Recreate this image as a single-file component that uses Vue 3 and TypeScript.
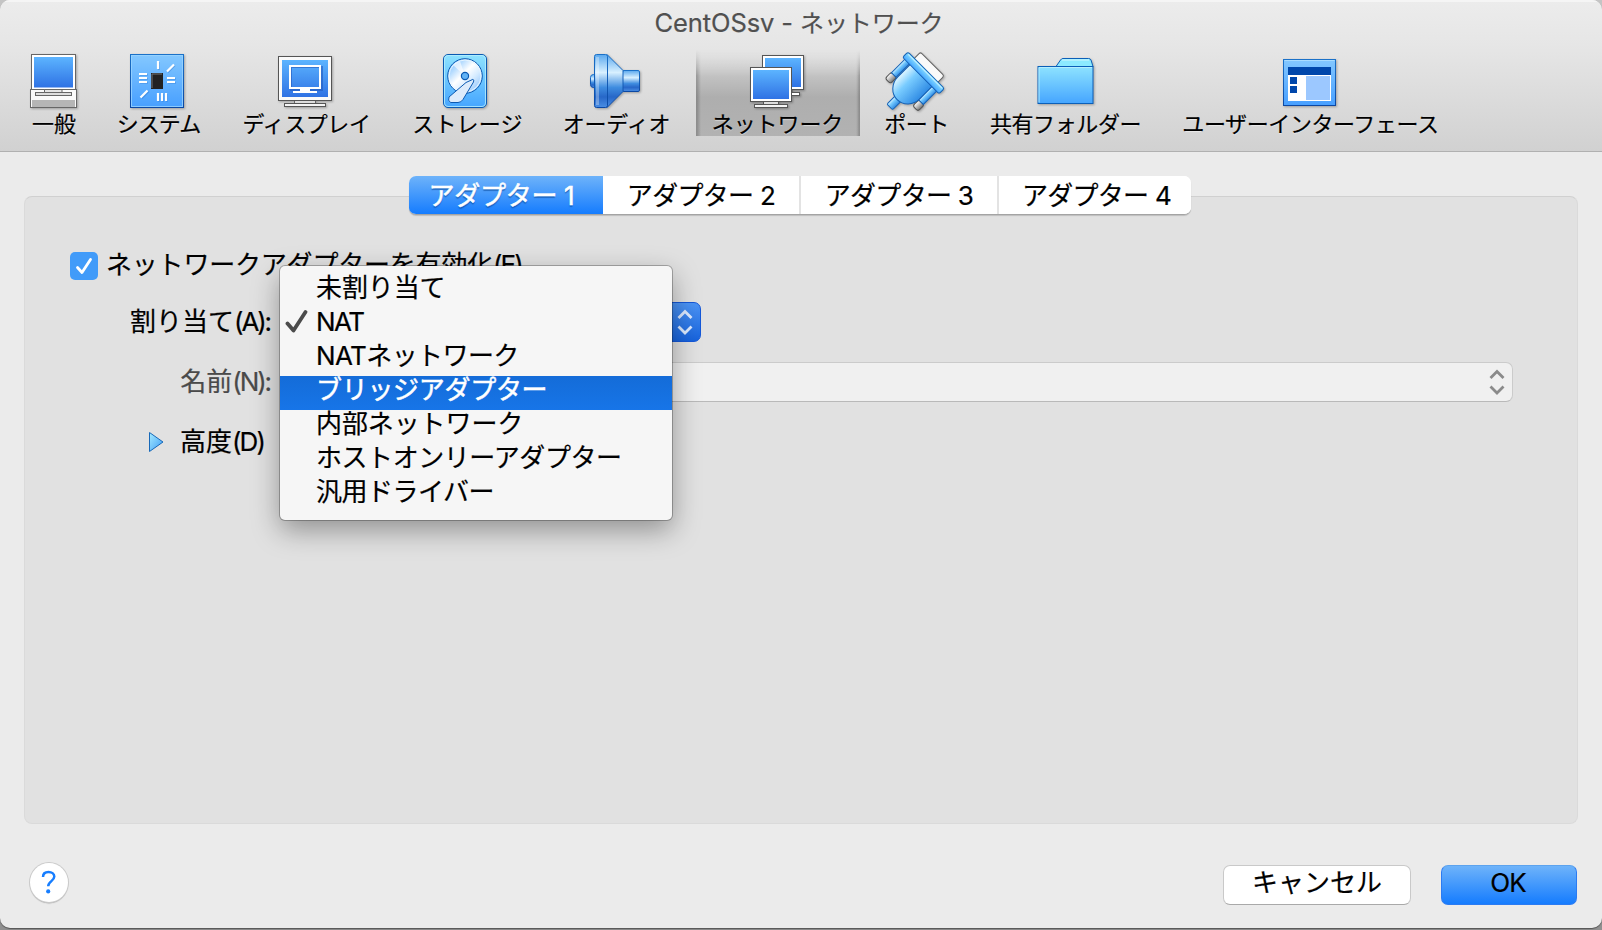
<script setup lang="ts">
interface Tool { id: string; label: string; width: number; view: string; gap?: number; spacing: number; shift?: number; selected?: boolean }
interface MenuItem { label: string; spacing: number; state?: 'checked' | 'active' }

const tools: Tool[] = [
  { id: 'general', label: '一般', width: 80, view: '22 50 64 62', spacing: 0 },
  { id: 'system', label: 'システム', width: 130, view: '127 50 64 62', spacing: -0.9, shift: -1 },
  { id: 'display', label: 'ディスプレイ', width: 162, view: '273 50 64 62', spacing: -0.4, shift: 3 },
  { id: 'storage', label: 'ストレージ', width: 164, view: '436 50 64 62', spacing: 0.2, shift: -1 },
  { id: 'audio', label: 'オーディオ', width: 132, view: '584 50 64 62', spacing: -0.2, shift: 1 },
  { id: 'network', label: 'ネットワーク', width: 164, view: '746 50 64 62', gap: 14, spacing: -0.1, shift: -1, selected: true },
  { id: 'port', label: 'ポート', width: 111, view: '883.5 50 64 62', spacing: -0.5, shift: 2 },
  { id: 'folder', label: '共有フォルダー', width: 189, view: '1033.5 50 64 62', spacing: -0.4 },
  { id: 'ui', label: 'ユーザーインターフェース', width: 300, view: '1278 50 64 62', spacing: -0.4, shift: 1 },
]
const tabs: number[] = [1, 2, 3, 4]
const menu: MenuItem[] = [
  { label: '未割り当て', spacing: -0.1 },
  { label: 'NAT', spacing: -1.5, state: 'checked' },
  { label: 'NATネットワーク', spacing: -0.6 },
  { label: 'ブリッジアダプター', spacing: -0.3, state: 'active' },
  { label: '内部ネットワーク', spacing: -0.1 },
  { label: 'ホストオンリーアダプター', spacing: -0.45 },
  { label: '汎用ドライバー', spacing: -0.5 },
]
</script>

<template>
  <div class="desktop">
    <div class="window">
      <header class="toolbar">
        <h1 class="title"><span class="latin">CentOSsv - </span><span>ネットワーク</span></h1>
        <nav class="tools">
          <div
            v-for="t in tools" :key="t.id" class="tool" :class="{ selected: t.selected }"
            :style="{ width: t.width + 'px', marginLeft: (t.gap || 0) + 'px' }"
          >
            <svg class="tool-icon" :viewBox="t.view" width="64" height="62">
              <defs>
                <linearGradient :id="t.id + '-scr'" x1="0" y1="0" x2="0" y2="1"><stop offset="0" stop-color="#5cb4ff" /><stop offset="1" stop-color="#2f72e4" /></linearGradient>
                <linearGradient :id="t.id + '-sky'" x1="0" y1="0" x2="0" y2="1"><stop offset="0" stop-color="#84c8ff" /><stop offset="1" stop-color="#479fff" /></linearGradient>
                <linearGradient :id="t.id + '-cyan'" x1="0" y1="0" x2="0" y2="1"><stop offset="0" stop-color="#8ee3ff" /><stop offset="1" stop-color="#45a5ff" /></linearGradient>
                <linearGradient :id="t.id + '-tube'" x1="0" y1="0" x2="0" y2="1"><stop offset="0" stop-color="#5aa8ee" /><stop offset=".34" stop-color="#d8f0ff" /><stop offset=".62" stop-color="#3f8de0" /><stop offset=".8" stop-color="#2767c8" /><stop offset="1" stop-color="#4a8ee4" /></linearGradient>
                <linearGradient :id="t.id + '-edge'" x1="0" y1="0" x2="0" y2="1"><stop offset="0" stop-color="#1b71c8" /><stop offset="1" stop-color="#0b48a4" /></linearGradient>
                <linearGradient :id="t.id + '-disc'" x1="0" y1="0" x2="1" y2="1"><stop offset="0" stop-color="#74b9ff" /><stop offset=".25" stop-color="#b4dbff" /><stop offset=".45" stop-color="#fff" /><stop offset=".65" stop-color="#d5ebff" /><stop offset="1" stop-color="#74b4fa" /></linearGradient>
                <linearGradient :id="t.id + '-body'" x1="0" y1="0" x2="1" y2="0"><stop offset="0" stop-color="#e2f7ff" /><stop offset=".35" stop-color="#79ccff" /><stop offset="1" stop-color="#2f8be4" /></linearGradient>
                <linearGradient :id="t.id + '-metal'" x1="0" y1="0" x2="1" y2="0"><stop offset="0" stop-color="#fff" /><stop offset="1" stop-color="#777" /></linearGradient>
              </defs>

              <g v-if="t.id === 'general'" stroke="#666">
                <rect x="31.5" y="54.5" width="44" height="35" fill="#fff" />
                <rect x="34" y="57" width="39" height="30.5" stroke="none" :fill="`url(#${t.id}-scr)`" />
                <rect x="30.5" y="89.5" width="46" height="18" fill="#fafafa" />
                <rect x="32" y="100" width="43" height="7" fill="#b5b5b5" stroke="none" />
                <rect x="35.5" y="92.5" width="36" height="3" fill="#ddd" />
                <path d="M44.5 89.5v3h17.500v-3z" fill="#e4e4e4" />
              </g>

              <g v-else-if="t.id === 'system'">
                <rect x="130.500" y="54.500" width="53" height="53" :fill="`url(#${t.id}-sky)`" :stroke="`url(#${t.id}-edge)`" />
                <rect x="131.500" y="55.500" width="51" height="51" fill="none" stroke="#9ad5ff" stroke-opacity=".8" />
                <g stroke="#2a74ca" stroke-opacity=".4" stroke-width="1.500" transform="translate(1 1)">
                  <path d="M158 61v8M167 71.500l7-7M167 78h8M167 82h8M158 93v8M162 93v8M166 93v8M141 97.500l7-7M139 74h8M139 78h8M139 82h8" fill="none" />
                </g>
                <path d="M158 61v8M167 71.500l7-7M167 78h8M167 82h8M158 93v8M162 93v8M166 93v8M140.500 97.500l7-7M139 74h8M139 78h8M139 82h8" fill="none" stroke="#fff" stroke-width="2.200" />
                <rect x="151" y="73" width="12" height="16" fill="#222" />
                <path d="M152 88V74h10" fill="none" stroke="#777" />
              </g>

              <g v-else-if="t.id === 'display'">
                <rect x="278.500" y="56.500" width="53" height="44" fill="#fafafa" stroke="#555" />
                <rect x="282" y="60" width="46" height="37" :fill="`url(#${t.id}-scr)`" />
                <rect x="291" y="67" width="31" height="23" fill="none" stroke="#2259bd" stroke-width="2" opacity=".6" />
                <rect x="290" y="66" width="30" height="22" fill="none" stroke="#fff" stroke-width="2" />
                <path d="M300 89h10v2h7v2h-24v-2h7z" fill="#fff" />
                <path d="M294.500 101v3h21v-3" fill="#ddd" stroke="#666" />
                <rect x="284.500" y="103.500" width="41" height="3" fill="#f4f4f4" stroke="#555" />
              </g>

              <g v-else-if="t.id === 'storage'" stroke="#0b5ab2">
                <rect x="443.500" y="54.500" width="43" height="53" rx="4.500" :fill="`url(#${t.id}-cyan)`" />
                <rect x="444.500" y="55.500" width="41" height="51" rx="3.500" fill="none" stroke="#b6efff" opacity=".8" />
                <circle cx="465" cy="76" r="17.300" :fill="`url(#${t.id}-disc)`" />
                <circle cx="465" cy="76" r="16" fill="none" stroke="#e6f5ff" />
                <path d="M465 76L453 65a16 16 0 0 1 7-4z" fill="#fff" stroke="none" opacity=".6" />
                <circle cx="465" cy="76" r="3.600" fill="#62b3f6" stroke-width="1.200" />
                <path d="M472.800 79.400Q474.500 79.500 473.500 82L463 99.500Q461 102.500 458 102.500H450.500Q447.500 100.500 449 97L466 82.500Z" fill="#dcebfb" />
              </g>

              <g v-else-if="t.id === 'audio'" :stroke="`url(#${t.id}-edge)`">
                <rect x="590.500" y="74.500" width="8" height="13" rx="3" :fill="`url(#${t.id}-tube)`" />
                <rect x="622.500" y="70.500" width="17" height="21" rx="1.500" :fill="`url(#${t.id}-tube)`" />
                <path d="M607 54.500L623 70.500V91.500L607 107.500Z" :fill="`url(#${t.id}-tube)`" />
                <rect x="594.500" y="54.500" width="13" height="53" rx="2" :fill="`url(#${t.id}-tube)`" />
                <path d="M597.500 57v48" stroke="#fff" stroke-opacity=".3" stroke-width="3" />
              </g>

              <g v-else-if="t.id === 'network'" stroke="#555">
                <path d="M784 90v3h8v-3" fill="#ddd" />
                <rect x="770.500" y="92.500" width="29" height="3" fill="#fff" />
                <rect x="762.500" y="55.500" width="41" height="34" fill="#fff" />
                <rect x="765" y="58" width="36" height="29" stroke="none" :fill="`url(#${t.id}-scr)`" />
                <path d="M763.500 102v3h15v-3" fill="#ddd" />
                <rect x="750.500" y="67.500" width="41" height="34" fill="#fff" />
                <rect x="753" y="70" width="36" height="29" stroke="none" :fill="`url(#${t.id}-scr)`" />
                <rect x="754.500" y="104.500" width="33" height="3" fill="#f4f4f4" />
              </g>

              <g v-else-if="t.id === 'port'" transform="translate(922.8 72.7) rotate(45)" stroke="#1361b6">
                <rect x="-16.500" y="-12.500" width="33.500" height="10" rx="2" fill="#fafafa" stroke="#666" />
                <rect x="-23" y="22" width="7.500" height="9" rx="2.500" :fill="`url(#${t.id}-metal)`" stroke="#555" />
                <rect x="16" y="22" width="7.500" height="9" rx="2.500" :fill="`url(#${t.id}-metal)`" stroke="#555" />
                <rect x="-3.500" y="33" width="8" height="15" rx="1.500" :fill="`url(#${t.id}-body)`" />
                <path d="M-15 3H16V21A15.500 16.500 0 0 1 -15 21Z" :fill="`url(#${t.id}-body)`" />
                <rect x="-22.500" y="3" width="6.500" height="19.500" :fill="`url(#${t.id}-body)`" />
                <rect x="16" y="3" width="6.500" height="19.500" :fill="`url(#${t.id}-body)`" />
                <rect x="-25.500" y="-3.800" width="51.500" height="7.600" rx="2" :fill="`url(#${t.id}-cyan)`" />
                <path d="M-23.500 -2.300H24" stroke="#c7f1ff" />
              </g>

              <g v-else-if="t.id === 'folder'" stroke="#0b5fb8">
                <path d="M1055.500 66.500L1060 60Q1061 58.500 1062.500 58.500H1088Q1090 58.500 1090.500 60L1092.500 66.500Z" fill="#8ceaff" />
                <path d="M1061.500 60h27" stroke="#d4f8ff" />
                <rect x="1037.500" y="66.500" width="55" height="37" :fill="`url(#${t.id}-cyan)`" />
                <path d="M1038.500 102.500v-35h53" fill="none" stroke="#b4eeff" />
              </g>

              <g v-else>
                <rect x="1283.500" y="59.500" width="52" height="46" :fill="`url(#${t.id}-sky)`" :stroke="`url(#${t.id}-edge)`" />
                <path d="M1284.500 60.500h50" stroke="#a9dcff" />
                <rect x="1288" y="67" width="43" height="8" fill="#0047ab" />
                <rect x="1288" y="75" width="43" height="26" fill="#fff" />
                <rect x="1306" y="76" width="24" height="24" fill="#9cc8ff" />
                <path d="M1290 77h7v7h-7zM1290 86h7v7h-7z" fill="#0047ab" />
              </g>
            </svg>
            <span class="tool-label" :style="{ letterSpacing: t.spacing + 'px', paddingLeft: Math.max(t.shift || 0, 0) + 'px', paddingRight: Math.max(-(t.shift || 0), 0) + 'px' }">{{ t.label }}</span>
          </div>
        </nav>
      </header>

      <main class="content">
        <div class="tabs">
          <button v-for="n in tabs" :key="n" class="tab" :class="{ current: n === 1 }">アダプター {{ n }}</button>
        </div>
        <section class="panel">
          <div class="enable">
            <span class="checkbox">
              <svg width="28" height="28" viewBox="0 0 28 28"><path d="M7.500 15.500L12 20.500L20.500 7.500" fill="none" stroke="#fff" stroke-width="2.800" stroke-linecap="round" stroke-linejoin="round" /></svg>
            </span>
            <span class="enable-text">ネットワークアダプターを有効化<span class="tight">(E)</span></span>
          </div>
          <div class="row attach">
            <label>割り当て<span class="tight">(A):</span></label>
            <div class="select popup">
              <svg width="16" height="26" viewBox="0 0 16 26"><path d="M1.500 9L8 2.500L14.500 9M1.500 17.500L8 24L14.500 17.500" /></svg>
            </div>
            <div class="menu">
              <div v-for="m in menu" :key="m.label" class="menu-item" :class="m.state" :style="{ letterSpacing: m.spacing + 'px' }">
                <svg v-if="m.state === 'checked'" class="tick" width="24" height="26" viewBox="0 0 24 26"><path d="M2.500 14.500L8.500 21.500L20.500 3" fill="none" stroke="#4b4b4b" stroke-width="3.800" stroke-linecap="round" stroke-linejoin="round" /></svg>
                <span>{{ m.label }}</span>
              </div>
            </div>
          </div>
          <div class="row name">
            <label>名前<span class="tight">(N):</span></label>
            <div class="select disabled">
              <svg width="16" height="26" viewBox="0 0 16 26"><path d="M1.500 9L8 2.500L14.500 9M1.500 17.500L8 24L14.500 17.500" /></svg>
            </div>
          </div>
          <div class="advanced">
            <svg width="17" height="22" viewBox="0 0 17 22">
              <defs><linearGradient id="adv" x1="0" y1="0" x2="1" y2="1"><stop offset="0" stop-color="#a6ebff" /><stop offset="1" stop-color="#3d9cf5" /></linearGradient></defs>
              <path d="M1.500 1.500V20.500L15 11Z" fill="url(#adv)" stroke="#1768b8" stroke-linejoin="round" />
            </svg>
            <span>高度<span class="tight">(D)</span></span>
          </div>
        </section>
        <footer class="footer">
          <button class="help">
            <svg width="16" height="26" viewBox="0 0 16 26"><path d="M2 7C2 3.500 4.300 1.900 7.500 1.900S13.300 3.700 13.300 6.600C13.300 11 7.200 11.300 7.200 16.300" fill="none" stroke="#177eff" stroke-width="2.500" /><circle cx="7.200" cy="21.400" r="2.100" fill="#177eff" /></svg>
          </button>
          <button class="button cancel">キャンセル</button>
          <button class="button ok">OK</button>
        </footer>
      </main>
    </div>
  </div>
</template>

<style>
html, body { margin: 0; background: #999; overflow: hidden; }
</style>

<style scoped>
* { box-sizing: border-box; }
.desktop {
  width: 1602px; height: 930px; overflow: hidden;
  font: 26px/34px "Inter", "Noto Sans CJK JP", sans-serif; color: #000;
  -webkit-text-stroke: .2px currentColor;
  background: linear-gradient(to bottom, #c4c4c4 0 500px, #909090 500px);
}
button { font: inherit; color: inherit; padding: 0; border: 0; }
.window { width: 1602px; height: 928px; background: #ebebeb; border-radius: 10px; overflow: hidden; box-shadow: 0 1px 1px #555; }
.toolbar { height: 152px; border-bottom: 1px solid #b0b0b0; background: linear-gradient(#ececec, #e6e6e6 30%, #d1d1d1); box-shadow: inset 0 2px 0 #f5f5f5; }
.title { margin: 0; height: 50px; padding-top: 6px; font-size: 24px; font-weight: 400; color: #505050; text-align: center; letter-spacing: -.1px; padding-right: 4px; }
.latin { white-space: pre; font-size: 25.5px; }
.tools { display: flex; padding-left: 14px; }
.tool { position: relative; height: 86px; display: flex; flex-direction: column; align-items: center; flex: none; }
.tool.selected::before {
  content: ""; position: absolute; inset: 0;
  background: linear-gradient(to right, rgba(0,0,0,.2) 0 1px, rgba(0,0,0,.1) 3px, transparent 5px, transparent 160px, rgba(0,0,0,.1) 162px, rgba(0,0,0,.2) 163px), linear-gradient(#d8d8d8, #c6c6c6 25%, #aeaeae 55%, #b2b2b2);
  mask-image: linear-gradient(transparent, #000 30%);
}
.tool-icon { position: relative; flex: none; overflow: visible; filter: drop-shadow(1px 1px 1px rgba(0,0,0,.28)); }
.tool-label { position: relative; font-size: 22px; line-height: 24px; white-space: nowrap; text-shadow: 0 1px 1px rgba(255,255,255,.5); }
.content { padding: 24px 24px 0; }
.tabs { position: relative; z-index: 1; display: flex; width: 782px; height: 39px; margin: 0 auto -19px 385px; border-radius: 7px; overflow: hidden; background: #fff; border-bottom: 1px solid #a4a4a4; box-shadow: 0 1px 1px rgba(0,0,0,.16); }
.tab { width: 198px; height: 38px; line-height: 37px; background: #fff; border-right: 2px solid #e3e3e3; letter-spacing: -.7px; white-space: nowrap; }
.tab:last-child { width: 192px; border: 0; padding-left: 3px; }
.tab.current { width: 194px; height: 39px; border: 0; padding-right: 9px; letter-spacing: -.3px; color: #fff; background: linear-gradient(#6eb3fa, #157cfe); border-bottom: 1px solid #0b64f2; text-shadow: 0 2px 1px rgba(0,60,140,.5); -webkit-text-stroke: .5px #fff; }
.panel { height: 628px; border: 1px solid #dadada; border-top-color: #d0d0d0; border-radius: 8px; background: #e1e1e1; padding: 50px 64px 0 45px; }
.enable { display: flex; align-items: center; height: 36px; gap: 8px; }
.checkbox { width: 28px; height: 28px; border-radius: 5px; background: #419bf9; margin-top: 1px; }
.checkbox svg { display: block; }
.enable-text { white-space: nowrap; letter-spacing: -.2px; }
.tight { letter-spacing: -1.9px; }
.row { display: grid; grid-template-columns: 202px 1fr; column-gap: 8px; align-items: center; height: 40px; position: relative; }
.row label { text-align: right; white-space: nowrap; line-height: 34px; padding-right: 1px; }
.row .tight { letter-spacing: -2.1px; padding-right: 1px; }
.attach { margin-top: 19px; z-index: 2; }
.name { margin-top: 20px; }
.name label { color: #4a4a4a; }
.select { height: 39px; display: flex; align-items: center; justify-content: flex-end; border-radius: 7px; padding-right: 7px; }
.select path { fill: none; stroke-width: 2.800; }
.popup { width: 421px; height: 40px; background: linear-gradient(#4c94f5, #1763dc); border: 1px solid #1558d8; }
.popup path { stroke: #dceaff; }
.disabled { height: 40px; background: #f0f0f0; border: 1px solid #cbcbcb; border-bottom-color: #b9b9b9; }
.disabled path { stroke: #8a8a8a; }
.menu { position: absolute; left: 210px; top: -36px; width: 392px; height: 254px; padding: 8px 0; border-radius: 5px; background: #f6f6f6; box-shadow: 0 0 0 1px rgba(0,0,0,.26), 0 10px 28px rgba(0,0,0,.36); }
.menu-item { height: 34px; padding-left: 36px; line-height: 27px; white-space: nowrap; position: relative; }
.menu-item.active { color: #fff; background: linear-gradient(#146cd8, #1775e8); -webkit-text-stroke: .5px #fff; }
.tick { position: absolute; left: 5px; top: 1px; }
.advanced { display: flex; align-items: center; gap: 15px; margin: 20px 0 0 78px; height: 40px; }
.footer { display: flex; align-items: flex-start; padding: 39px 1px 0 6px; height: 104px; }
.help { width: 38px; height: 39px; border-radius: 50%; background: #fff; box-shadow: 0 0 0 1px #cacaca, 0 1.500px 1px #aaa; margin-right: auto; display: flex; align-items: center; justify-content: center; }
.button { height: 40px; margin-top: 2px; border-radius: 7px; line-height: 34px; padding-bottom: 4px; }
.cancel { width: 188px; background: #fff; border: 1px solid #c9c9c9; border-bottom-color: #a9a9a9; margin-right: 30px; }
.ok { width: 136px; background: linear-gradient(#6eb3fa, #157cfe); border: 1px solid #2b7bf2; border-top-color: #5ca3ee; letter-spacing: -1px; padding-right: 2px; }
</style>
